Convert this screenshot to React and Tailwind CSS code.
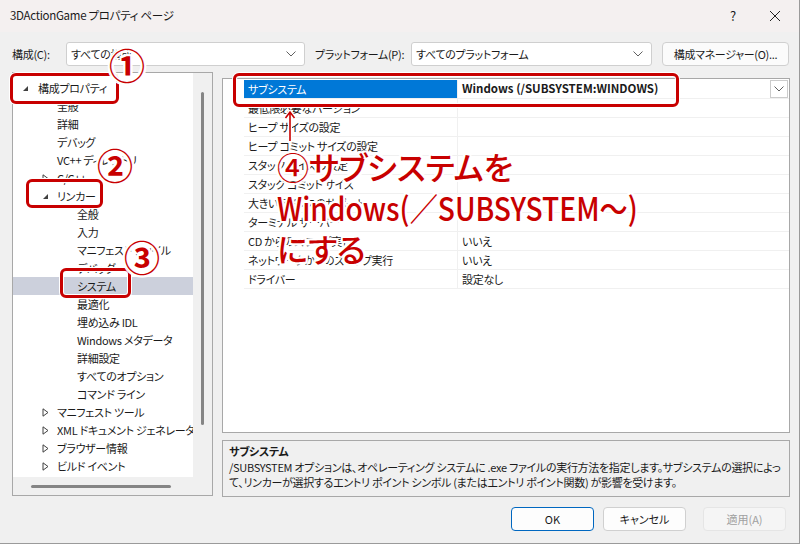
import React from 'react';

const jp = "font-['Noto_Sans_CJK_JP',sans-serif] [font-feature-settings:'palt']";
const halo = '[text-shadow:2px_0_0_#fff,-2px_0_0_#fff,0_2px_0_#fff,0_-2px_0_#fff,2px_2px_0_#fff,-2px_-2px_0_#fff,2px_-2px_0_#fff,-2px_2px_0_#fff]';

const tree = [
  { t: '構成プロパティ', lv: 0, open: true },
  { t: '全般', lv: 1 },
  { t: '詳細', lv: 1 },
  { t: 'デバッグ', lv: 1 },
  { t: 'VC++ ディレクトリ', lv: 1 },
  { t: 'C/C++', lv: 1, closed: true },
  { t: 'リンカー', lv: 1, open: true },
  { t: '全般', lv: 2 },
  { t: '入力', lv: 2 },
  { t: 'マニフェスト ファイル', lv: 2 },
  { t: 'デバッグ', lv: 2 },
  { t: 'システム', lv: 2, sel: true },
  { t: '最適化', lv: 2 },
  { t: '埋め込み IDL', lv: 2 },
  { t: 'Windows メタデータ', lv: 2 },
  { t: '詳細設定', lv: 2 },
  { t: 'すべてのオプション', lv: 2 },
  { t: 'コマンド ライン', lv: 2 },
  { t: 'マニフェスト ツール', lv: 1, closed: true },
  { t: 'XML ドキュメント ジェネレーター', lv: 1, closed: true },
  { t: 'ブラウザー情報', lv: 1, closed: true },
  { t: 'ビルド イベント', lv: 1, closed: true },
  { t: 'カスタム ビルド ステップ', lv: 1, closed: true },
];

const props = [
  ['サブシステム', 'Windows (/SUBSYSTEM:WINDOWS)'],
  ['最低限必要なバージョン', ''],
  ['ヒープ サイズの設定', ''],
  ['ヒープ コミット サイズの設定', ''],
  ['スタック サイズの設定', ''],
  ['スタック コミット サイズ', ''],
  ['大きいアドレスのサポート', ''],
  ['ターミナル サーバー', ''],
  ['CD からのスワップ実行', 'いいえ'],
  ['ネットワークからのスワップ実行', 'いいえ'],
  ['ドライバー', '設定なし'],
];

const Chevron = () => (
  <svg width="10" height="6" viewBox="0 0 10 6">
    <path d="M0.5 0.5 L5 5 L9.5 0.5" fill="none" stroke="#606060" strokeWidth="1" />
  </svg>
);

const Arrow = ({ open }) =>
  open ? (
    <svg width="7" height="7" viewBox="0 0 7 7"><path d="M6 1 L6 6 L1 6 Z" fill="#404040" /></svg>
  ) : (
    <svg width="7" height="9" viewBox="0 0 7 9"><path d="M1 0.8 L6 4.5 L1 8.2 Z" fill="none" stroke="#404040" strokeWidth="1" /></svg>
  );

function Select({ value, w }) {
  return (
    <div className={`h-[24px] ${w} bg-white border border-[#cfcfcf] rounded-[3px] flex items-center justify-between pl-[4px] pr-[8px]`}>
      <span>{value}</span>
      <Chevron />
    </div>
  );
}

const RedBox = ({ className }) => (
  <div className={`absolute border-[3px] border-[#c80000] rounded-[6px] shadow-[0_0_0_1px_#fff,inset_0_0_0_1px_#fff] ${className}`} />
);

export default function App() {
  return (
    <div className={`relative w-[800px] h-[544px] bg-[#f0f0f0] overflow-hidden text-[11px] tracking-[-0.3px] text-[#1a1a1a] border-r border-b border-[#9a9a9a] ${jp}`}>
      {/* title bar */}
      <div className="h-[32px] bg-[#f4f0f0] flex items-center pl-[10px]">
        <span className="flex-1 text-[11.5px]">3DActionGame プロパティ ページ</span>
        <span className="w-[20px] text-center text-[13px] mr-[26px]">?</span>
        <svg width="12" height="12" viewBox="0 0 12 12" className="mr-[18px]">
          <path d="M1 1 L11 11 M11 1 L1 11" stroke="#222" strokeWidth="1" />
        </svg>
      </div>

      {/* toolbar */}
      <div className="flex items-center h-[24px] mt-[10px] pl-[12px] whitespace-nowrap">
        <span className="w-[54px]">構成(C):</span>
        <Select value="すべての構成" w="w-[239px]" />
        <span className="ml-[10px] w-[96px]">プラットフォーム(P):</span>
        <Select value="すべてのプラットフォーム" w="w-[241px]" />
        <div className="ml-[10px] w-[127px] h-[24px] bg-[#fbfbfb] border border-[#d0d0d0] rounded-[4px] flex items-center justify-center">
          構成マネージャー(O)...
        </div>
      </div>

      <div className="flex pl-[12px]">
        {/* left tree panel */}
        <div className="mt-[6px] w-[201px] h-[424px] border border-[#a8a8a8] flex flex-col">
          <div className="flex flex-1 min-h-0">
            <div className="w-[180px] bg-white pt-[6px] overflow-hidden">
              {tree.map((n, i) => (
                <div
                  key={i}
                  className={`h-[18px] flex items-center whitespace-nowrap ${n.sel ? 'bg-[#ccd0dc]' : ''}`}
                  style={{ paddingLeft: n.lv === 0 ? 9 : n.lv === 1 ? 29 : 64 }}
                >
                  {n.lv < 2 && (
                    <span className={`${n.lv === 0 ? 'w-[16px]' : 'w-[15px]'} shrink-0 flex items-center`}>
                      {(n.open || n.closed) && <Arrow open={n.open} />}
                    </span>
                  )}
                  <span className="shrink-0">{n.t}</span>
                </div>
              ))}
            </div>
            <div className="flex-1 flex justify-center pt-[19px] pb-[52px]">
              <div className="w-[3px] h-full bg-[#858585] rounded-full" />
            </div>
          </div>
          <div className="h-[18px] flex items-center pl-[18px]">
            <div className="w-[140px] h-[3px] bg-[#858585] rounded-full" />
          </div>
        </div>

        {/* right column */}
        <div className="ml-[9px] flex flex-col">
          <div className="mt-[12px] w-[568px] h-[355px] bg-white border border-[#a8a8a8] pl-[21px] pt-[1px]">
            {props.map(([k, v], i) => (
              <div key={i} className="h-[19px] flex border-b border-[#f0f0f0]">
                <div className={`w-[214px] flex items-center pl-[4px] border-r border-[#f0f0f0] ${i === 0 ? 'bg-[#0078d7] text-white' : ''}`}>
                  {k}
                </div>
                <div className={`flex-1 flex items-center pl-[4px] ${i === 0 ? 'font-bold text-[11.5px] tracking-normal' : ''}`}>{v}</div>
                {i === 0 ? (
                  <div className="w-[18px] h-[18px] border border-[#cccccc] bg-white flex items-center justify-center mr-[1px]">
                    <Chevron />
                  </div>
                ) : (
                  <div className="w-[19px]" />
                )}
              </div>
            ))}
          </div>
          <div className="mt-[7px] w-[568px] h-[57px] border border-[#a8a8a8] bg-[#f0f0f0] pl-[6px] pt-[2px] leading-[15px]">
            <div className="font-bold h-[17px] flex items-center">サブシステム</div>
            <div className="whitespace-nowrap">
              /SUBSYSTEM オプションは、オペレーティング システムに .exe ファイルの実行方法を指定します。サブシステムの選択によっ
              <br />
              て、リンカーが選択するエントリ ポイント シンボル (またはエントリ ポイント関数) が影響を受けます。
            </div>
          </div>
        </div>
      </div>

      {/* buttons */}
      <div className="flex justify-end gap-[9px] pr-[13px] mt-[10px] tracking-normal">
        <div className="w-[83px] h-[24px] bg-[#fdfdfd] border border-[#0067c0] rounded-[4px] flex items-center justify-center">OK</div>
        <div className="w-[83px] h-[24px] bg-[#fdfdfd] border border-[#d0d0d0] rounded-[4px] flex items-center justify-center">キャンセル</div>
        <div className="ml-[8px] w-[83px] h-[24px] bg-[#f5f5f5] border border-[#e5e5e5] rounded-[4px] flex items-center justify-center text-[#a0a0a0]">適用(A)</div>
      </div>

      {/* annotations */}
      <RedBox className="left-[10px] top-[73px] w-[109px] h-[31px]" />
      <RedBox className="left-[26px] top-[179px] w-[77px] h-[29px]" />
      <RedBox className="left-[60px] top-[268px] w-[71px] h-[30px]" />
      <RedBox className="left-[233px] top-[73px] w-[446px] h-[34px]" />

      <div className={`absolute left-[109px] top-[44px] text-[36px] leading-[40px] font-bold tracking-normal text-[#c80000] ${halo}`}>①</div>
      <div className={`absolute left-[97px] top-[144px] text-[36px] leading-[40px] font-bold tracking-normal text-[#c80000] ${halo}`}>②</div>
      <div className={`absolute left-[124px] top-[236px] text-[36px] leading-[40px] font-bold tracking-normal text-[#c80000] ${halo}`}>③</div>

      <svg className="absolute left-[284px] top-[110px]" width="12" height="32" viewBox="0 0 12 32">
        <path d="M6 31 L6 3 M1.5 8 L6 2 L10.5 8" fill="none" stroke="#fff" strokeWidth="4" />
        <path d="M6 31 L6 3 M1.5 8 L6 2 L10.5 8" fill="none" stroke="#c80000" strokeWidth="1.6" />
      </svg>

      <div className={`absolute left-[277px] top-[146px] text-[32px] leading-[41px] font-medium tracking-normal text-[#c80000] whitespace-nowrap ${halo}`}>
        <div>④サブシステムを</div>
        <div className="origin-left scale-x-[0.88]">Windows(／SUBSYSTEM〜)</div>
        <div>にする</div>
      </div>
    </div>
  );
}
